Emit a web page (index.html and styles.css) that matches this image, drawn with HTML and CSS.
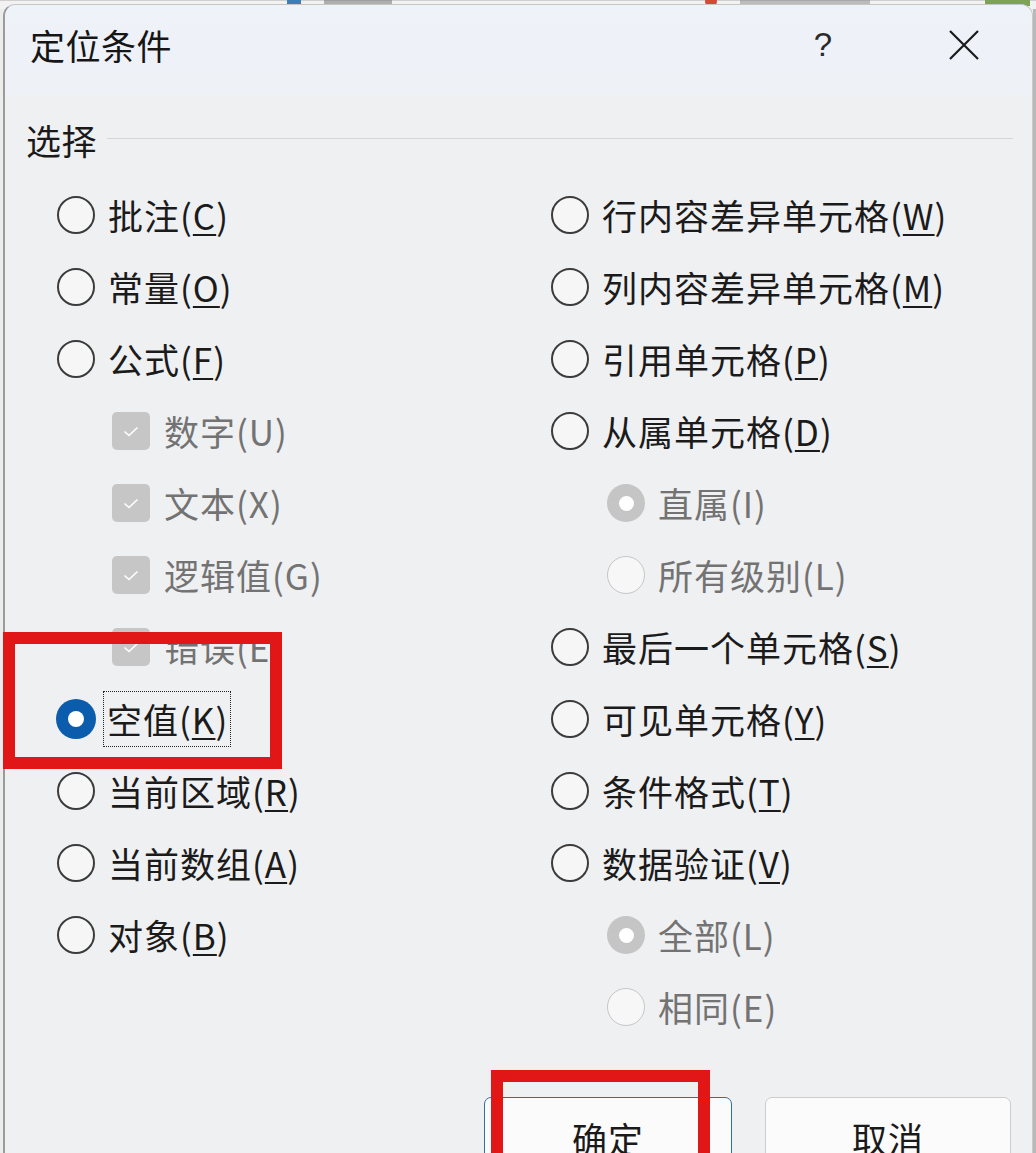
FILE: index.html
```html
<!DOCTYPE html>
<html lang="zh-CN">
<head>
<meta charset="utf-8">
<title>定位条件</title>
<link rel="stylesheet" href="styles.css">
</head>
<body>
<div class="stage">
  <div class="behind">
    <span class="bh-icon bh-blue"></span><span class="bh-text bh-t1"></span>
    <span class="bh-icon bh-red"></span><span class="bh-text bh-t2"></span>
    <span class="bh-icon bh-green"></span>
  </div>

  <div class="dialog">
    <div class="titlebar">
      <span class="title">定位条件</span>
      <span class="help">?</span>
      <span class="close">
        <svg width="32" height="32" viewBox="0 0 32 32"><path d="M2 2 L30 30 M30 2 L2 30" stroke="#1a1a1a" stroke-width="2.2" fill="none"/></svg>
      </span>
    </div>

    <div class="group-head">
      <span class="group-label">选择</span>
      <span class="rule"></span>
    </div>

    <div class="cols">
      <div class="col">
        <div class="row"><span class="radio"></span><span class="label">批注(<u>C</u>)</span></div>
        <div class="row"><span class="radio"></span><span class="label">常量(<u>O</u>)</span></div>
        <div class="row"><span class="radio"></span><span class="label">公式(<u>F</u>)</span></div>
        <div class="row sub-check"><span class="check"><svg width="16" height="11" viewBox="0 0 16 11"><path d="M1.5 5.5 L6 9.5 L14.5 1.5" stroke="#fff" stroke-width="1.6" fill="none"/></svg></span><span class="label dim">数字(U)</span></div>
        <div class="row sub-check"><span class="check"><svg width="16" height="11" viewBox="0 0 16 11"><path d="M1.5 5.5 L6 9.5 L14.5 1.5" stroke="#fff" stroke-width="1.6" fill="none"/></svg></span><span class="label dim">文本(X)</span></div>
        <div class="row sub-check"><span class="check"><svg width="16" height="11" viewBox="0 0 16 11"><path d="M1.5 5.5 L6 9.5 L14.5 1.5" stroke="#fff" stroke-width="1.6" fill="none"/></svg></span><span class="label dim">逻辑值(G)</span></div>
        <div class="row sub-check"><span class="check"><svg width="16" height="11" viewBox="0 0 16 11"><path d="M1.5 5.5 L6 9.5 L14.5 1.5" stroke="#fff" stroke-width="1.6" fill="none"/></svg></span><span class="label dim">错误(E)</span></div>
        <div class="row"><span class="radio on"></span><span class="label focus">空值(<u>K</u>)</span></div>
        <div class="row"><span class="radio"></span><span class="label">当前区域(<u>R</u>)</span></div>
        <div class="row"><span class="radio"></span><span class="label">当前数组(<u>A</u>)</span></div>
        <div class="row"><span class="radio"></span><span class="label">对象(<u>B</u>)</span></div>
      </div>
      <div class="col">
        <div class="row"><span class="radio"></span><span class="label">行内容差异单元格(<u>W</u>)</span></div>
        <div class="row"><span class="radio"></span><span class="label">列内容差异单元格(<u>M</u>)</span></div>
        <div class="row"><span class="radio"></span><span class="label">引用单元格(<u>P</u>)</span></div>
        <div class="row"><span class="radio"></span><span class="label">从属单元格(<u>D</u>)</span></div>
        <div class="row sub-radio"><span class="radio dis-on"></span><span class="label dim">直属(I)</span></div>
        <div class="row sub-radio"><span class="radio dis"></span><span class="label dim">所有级别(L)</span></div>
        <div class="row"><span class="radio"></span><span class="label">最后一个单元格(<u>S</u>)</span></div>
        <div class="row"><span class="radio"></span><span class="label">可见单元格(<u>Y</u>)</span></div>
        <div class="row"><span class="radio"></span><span class="label">条件格式(<u>T</u>)</span></div>
        <div class="row"><span class="radio"></span><span class="label">数据验证(<u>V</u>)</span></div>
        <div class="row sub-radio"><span class="radio dis-on"></span><span class="label dim">全部(L)</span></div>
        <div class="row sub-radio"><span class="radio dis"></span><span class="label dim">相同(E)</span></div>
      </div>
    </div>

    <div class="buttons">
      <button class="btn primary">确定</button>
      <button class="btn">取消</button>
    </div>
  </div>

  <div class="mark mark-empty"></div>
  <div class="mark mark-ok"></div>
</div>
</body>
</html>
```

FILE: styles.css
```css
html, body {
  margin: 0;
  padding: 0;
}
body {
  width: 1036px;
  height: 1153px;
  overflow: hidden;
  background: #e9e9e9;
  font-family: "Noto Sans CJK SC", "Noto Sans", sans-serif;
  color: #1b1b1b;
}
.stage {
  position: relative;
  width: 1036px;
  height: 1153px;
  overflow: hidden;
  background: linear-gradient(to right, #ececec 0, #ececec 1033px, #b9b9b9 1033px);
}

/* faint spreadsheet content behind the dialog */
.behind {
  position: absolute;
  left: 0;
  top: 0;
  width: 1036px;
  height: 8px;
  background: #f2f2f2;
  border-top: 1px solid #cfcfcf;
}
.bh-icon, .bh-text {
  position: absolute;
  top: -4px;
  height: 9px;
}
.bh-blue { left: 287px; width: 14px; background: #3d7db8; }
.bh-t1 { left: 324px; width: 68px; background: #777; opacity: .55; }
.bh-red { left: 705px; width: 12px; background: #d6483a; border-radius: 6px; }
.bh-t2 { left: 740px; width: 130px; background: #777; opacity: .45; }
.bh-green { left: 985px; width: 45px; background: #7da356; }

.dialog {
  position: relative;
  margin-left: 3px;
  margin-top: 4px;
  width: 1027px;
  height: 1200px;
  background: #eff0f2;
  border-left: 2px solid #9b9b9b;
  border-right: 1px solid #c9c9c9;
  border-top: 1px solid #c6c6c6;
  border-radius: 12px 12px 0 0;
  box-sizing: content-box;
}

.titlebar {
  display: flex;
  align-items: center;
  height: 90px;
  padding: 0 52px 0 25px;
  box-sizing: border-box;
  background: linear-gradient(#eef2f9, #eef1f6);
  border-radius: 12px 12px 0 0;
}
.title {
  flex: 1;
  font-size: 35px;
  letter-spacing: 0.5px;
  line-height: 50px;
  margin-top: -10px;
  color: #161616;
}
.help {
  width: 30px;
  text-align: center;
  font-family: "Liberation Sans", sans-serif;
  font-size: 33px;
  line-height: 50px;
  margin-top: -10px;
  margin-right: 110px;
  color: #2a2a2a;
}
.close {
  width: 32px;
  height: 32px;
  margin-top: -10px;
  display: flex;
}

.group-head {
  display: flex;
  align-items: center;
  margin-top: 23px;
  padding: 0 19px 0 21px;
  height: 44px;
}
.group-label {
  font-size: 35px;
  letter-spacing: 0.5px;
  line-height: 44px;
  color: #1a1a1a;
}
.rule {
  flex: 1;
  height: 1px;
  margin-left: 10px;
  margin-bottom: 4px;
  background: #d3d5d8;
}

.cols {
  display: grid;
  grid-template-columns: 494px 1fr;
  margin-top: 17px;
  padding-left: 52px;
}
.row {
  display: flex;
  align-items: center;
  height: 72px;
}
.sub-check { padding-left: 55px; }
.sub-radio { padding-left: 56px; }

.label {
  font-size: 35px;
  letter-spacing: 1px;
  line-height: 40px;
  margin-left: 13px;
  white-space: nowrap;
  color: #1b1b1b;
}
.label u {
  text-decoration-thickness: 2px;
  text-underline-offset: 4px;
}
.label.dim { color: #737373; }
.sub-check .label { margin-left: 14px; }
.label.focus {
  margin-left: 8px;
  padding: 7px 2px 7px 3px;
  border: 1px dotted #222;
}

.radio {
  width: 38px;
  height: 38px;
  box-sizing: border-box;
  border-radius: 50%;
  border: 2px solid #3c3c3c;
  background: #f6f6f7;
  flex: none;
  display: flex;
  align-items: center;
  justify-content: center;
}
.radio.on {
  width: 40px;
  height: 40px;
  margin-left: -1px;
  margin-right: -1px;
  border: none;
  background: #0b5cad;
}
.radio.on::after {
  content: "";
  width: 16px;
  height: 16px;
  border-radius: 50%;
  background: #fff;
}
.radio.dis-on {
  border: none;
  background: #c5c5c5;
}
.radio.dis-on::after {
  content: "";
  width: 15px;
  height: 15px;
  border-radius: 50%;
  background: #fff;
}
.radio.dis {
  border: 1.5px solid #c6c6c6;
  background: #f7f7f8;
}

.check {
  width: 38px;
  height: 38px;
  border-radius: 5px;
  background: #c6c6c6;
  flex: none;
  display: flex;
  align-items: center;
  justify-content: center;
}

.buttons {
  display: flex;
  justify-content: flex-end;
  gap: 33px;
  margin-top: 54px;
  padding-right: 21px;
}
.btn {
  width: 248px;
  height: 84px;
  box-sizing: border-box;
  background: #fbfbfc;
  border: 1px solid #cdcdcd;
  border-radius: 7px;
  font-family: "Noto Sans CJK SC", sans-serif;
  font-size: 35px;
  letter-spacing: 1px;
  color: #1a1a1a;
  padding: 0;
  padding-bottom: 4px;
}
.btn:last-child { width: 246px; }
.btn.primary {
  border: 1.5px solid #2a6fa6;
}

.mark {
  position: absolute;
  border: 12px solid #e11717;
  box-sizing: border-box;
}
.mark-empty {
  left: 3px;
  top: 632px;
  width: 279px;
  height: 137px;
}
.mark-ok {
  left: 491px;
  top: 1070px;
  width: 219px;
  height: 120px;
}
```
